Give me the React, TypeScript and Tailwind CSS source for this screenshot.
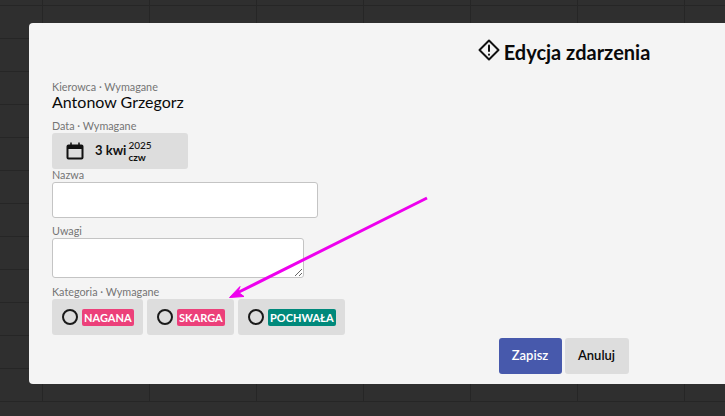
import React from "react"

const cellIndexes = Array.from({ length: 104 }, (_, index) => index)

const Label = ({ children }: { children: React.ReactNode }) => (
    <div className="text-[10.8px] leading-[14px] text-[#757575]">{children}</div>
)

const CategoryOption = ({
    name,
    tagClass,
    width,
}: {
    name: string
    tagClass: string
    width: string
}) => (
    <div
        className={`flex h-9 items-center rounded-[3px] bg-[#dddddd] pl-[10px] ${width}`}
    >
        <div className="box-border h-4 w-4 rounded-full border-2 border-[#1a1a1a]" />
        <div
            className={`ml-[4px] h-[17px] rounded-[2px] px-[2px] text-[11px] font-bold leading-[17px] text-white ${tagClass}`}
        >
            {name}
        </div>
    </div>
)

export default function App() {
    return (
        <div className="relative h-[416px] w-[725px] overflow-hidden bg-[#2f2f2f] font-['Lato',sans-serif]">
            <div className="ml-[-64px] mt-[-27px] grid w-[856px] grid-cols-8">
                {cellIndexes.map((index) => (
                    <div
                        key={index}
                        className="box-border h-[33px] border-b border-r border-[#262626]"
                    />
                ))}
            </div>

            <div className="absolute left-[29px] top-[23px] h-[361px] w-[1071px] rounded-[4px] bg-[#f4f4f4]">
                <div className="flex h-[58px] items-start justify-center pr-[2px] pt-[16px]">
                    <svg
                        className="mr-[3px] mt-[-1px] h-[24px] w-[24px] text-[#111111]"
                        viewBox="0 0 24 24"
                        fill="none"
                        stroke="currentColor"
                        strokeWidth="2"
                        strokeLinejoin="round"
                        strokeLinecap="round"
                    >
                        <path d="M12 2.5 21.5 12 12 21.5 2.5 12Z" />
                        <path d="M12 7.5v5.5" />
                        <path d="M12 16.5v.2" />
                    </svg>
                    <div className="text-xl font-bold leading-[26px] text-[#0a0a0a]">
                        Edycja zdarzenia
                    </div>
                </div>

                <div className="pl-[23px]">
                    <div className="text-[10.8px] leading-[12px] text-[#757575]">
                        Kierowca · Wymagane
                    </div>
                    <div className="mb-[9px] text-base leading-[17px] text-[#0a0a0a]">
                        Antonow Grzegorz
                    </div>
                    <Label>Data · Wymagane</Label>
                    <div className="flex h-9 w-[136px] items-center rounded-[3px] bg-[#dddddd] pl-[14px]">
                        <svg
                            className="h-[18px] w-[18px] text-[#111111]"
                            viewBox="0 0 18 18"
                            fill="none"
                            stroke="currentColor"
                        >
                            <rect x="1.5" y="3.5" width="15" height="13" rx="1" strokeWidth="2" />
                            <path d="M1.5 5.5h15" strokeWidth="3" />
                            <path d="M5 0.5v3.5M13 0.5v3.5" strokeWidth="1.5" />
                        </svg>
                        <div className="ml-[11px] text-[13px] font-bold text-[#111111]">
                            3 kwi
                        </div>
                        <div className="ml-[2px] text-[10px] font-medium leading-[12px] text-[#111111]">
                            <div>2025</div>
                            <div className="font-bold">czw</div>
                        </div>
                    </div>
                    <div className="mt-[-1px]">
                        <Label>Nazwa</Label>
                    </div>
                    <input
                        className="mb-[6px] block h-9 w-[266px] rounded-[3px] border border-[#c4c4c4] bg-white"
                        type="text"
                    />
                    <Label>Uwagi</Label>
                    <textarea className="mb-[7px] block h-10 w-[252px] rounded-[3px] border border-[#c4c4c4] bg-white" />
                    <Label>Kategoria · Wymagane</Label>
                    <div className="flex gap-1">
                        <CategoryOption
                            name="NAGANA"
                            tagClass="bg-[#ec407a]"
                            width="w-[91px]"
                        />
                        <CategoryOption
                            name="SKARGA"
                            tagClass="bg-[#ec407a]"
                            width="w-[87px]"
                        />
                        <CategoryOption
                            name="POCHWAŁA"
                            tagClass="bg-[#00897b]"
                            width="w-[107px]"
                        />
                    </div>
                </div>

                <div className="mt-[3px] flex justify-center gap-[3px] pr-[2px]">
                    <div className="flex h-9 w-[63px] items-center justify-center rounded-[3px] bg-[#4759ac] text-[13px] font-semibold text-white">
                        Zapisz
                    </div>
                    <div className="flex h-9 w-[64px] items-center justify-center rounded-[3px] bg-[#dddddd] text-[13px] font-semibold text-[#0a0a0a]">
                        Anuluj
                    </div>
                </div>
            </div>

            <svg className="absolute left-0 top-0 h-[416px] w-[725px]" viewBox="0 0 725 416">
                <path d="M427 198 237 293" fill="none" stroke="#ee00ee" strokeWidth="3" />
                <path d="M229.5 297.5 240 286.5 238 292 244 296.5Z" fill="#ee00ee" stroke="#ee00ee" />
            </svg>
        </div>
    )
}
